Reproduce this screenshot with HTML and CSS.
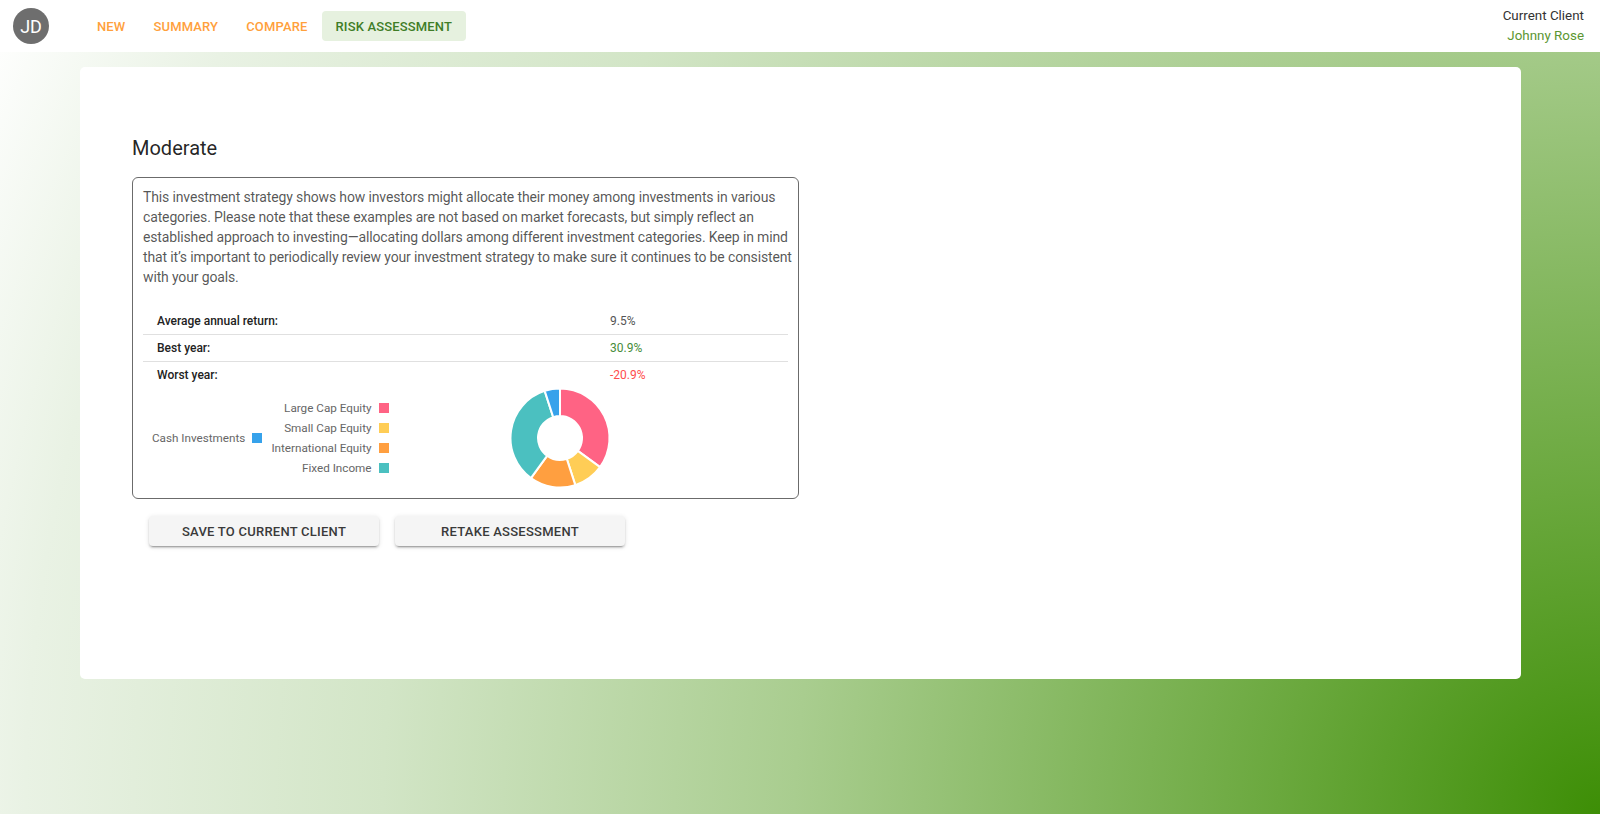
FILE: index.html
```html
<!DOCTYPE html>
<html lang="en">
<head>
<meta charset="utf-8">
<title>Risk Assessment</title>
<link rel="stylesheet" href="styles.css">
</head>
<body>
<header class="topbar">
  <div class="avatar">JD</div>
  <nav class="nav">
    <a class="nav-item">NEW</a>
    <a class="nav-item">SUMMARY</a>
    <a class="nav-item">COMPARE</a>
    <a class="nav-item active">RISK ASSESSMENT</a>
  </nav>
  <div class="client">
    <div class="client-label">Current Client</div>
    <div class="client-name">Johnny Rose</div>
  </div>
</header>
<main class="card">
  <h2 class="title">Moderate</h2>
  <section class="panel">
    <p class="desc">This investment strategy shows how investors might allocate their money among investments in various categories. Please note that these examples are not based on market forecasts, but simply reflect an established approach to investing—allocating dollars among different investment categories. Keep in mind that it’s important to periodically review your investment strategy to make sure it continues to be consistent with your goals.</p>
    <div class="stats">
      <div class="row"><span class="label">Average annual return:</span><span class="value">9.5%</span></div>
      <div class="row"><span class="label">Best year:</span><span class="value good">30.9%</span></div>
      <div class="row"><span class="label">Worst year:</span><span class="value bad">-20.9%</span></div>
    </div>
    <div class="chart">
      <div class="legend">
        <div class="legend-col">
          <div class="legend-item">Cash Investments<i class="sw sw-blue"></i></div>
        </div>
        <div class="legend-col">
          <div class="legend-item">Large Cap Equity<i class="sw sw-pink"></i></div>
          <div class="legend-item">Small Cap Equity<i class="sw sw-yellow"></i></div>
          <div class="legend-item">International Equity<i class="sw sw-orange"></i></div>
          <div class="legend-item">Fixed Income<i class="sw sw-teal"></i></div>
        </div>
      </div>
      <svg class="donut" width="100" height="100" viewBox="0 0 100 100">
        <g stroke="#fff" stroke-width="2" stroke-linejoin="round">
          <path fill="#ff6384" d="M50 0.5 A49.5 49.5 0 0 1 90.05 79.10 L67.80 62.93 A22 22 0 0 0 50 28 Z"/>
          <path fill="#ffcd56" d="M90.05 79.10 A49.5 49.5 0 0 1 65.30 97.08 L56.80 70.92 A22 22 0 0 0 67.80 62.93 Z"/>
          <path fill="#ff9f40" d="M65.30 97.08 A49.5 49.5 0 0 1 20.90 90.05 L37.07 67.80 A22 22 0 0 0 56.80 70.92 Z"/>
          <path fill="#4bc0c0" d="M20.90 90.05 A49.5 49.5 0 0 1 34.70 2.92 L43.20 29.08 A22 22 0 0 0 37.07 67.80 Z"/>
          <path fill="#36a2eb" d="M34.70 2.92 A49.5 49.5 0 0 1 50 0.5 L50 28 A22 22 0 0 0 43.20 29.08 Z"/>
        </g>
      </svg>
    </div>
  </section>
  <div class="actions">
    <button class="btn">SAVE TO CURRENT CLIENT</button>
    <button class="btn">RETAKE ASSESSMENT</button>
  </div>
</main>
</body>
</html>
```
FILE: styles.css
```css
html, body {
  margin: 0;
  padding: 0;
}
body {
  min-height: 814px;
  font-family: Roboto, "Liberation Sans", Arial, sans-serif;
  color: rgba(0, 0, 0, 0.87);
  background: radial-gradient(circle 1790px at 100% 100%, #3d8e06 0%, #6aa83d 18%, #a9cd8f 45%, #d2e5c6 68%, #e9f2e4 88%, #ffffff 100%);
  overflow: hidden;
}
.topbar {
  height: 52px;
  background: #fff;
  display: flex;
  align-items: center;
  padding: 0 16px 0 13px;
}
.avatar {
  width: 36px;
  height: 36px;
  border-radius: 50%;
  background: #6e6e6e;
  color: #fff;
  font-size: 18px;
  display: flex;
  align-items: center;
  justify-content: center;
  flex: none;
}
.nav {
  display: flex;
  align-items: center;
  margin-left: 34px;
}
.nav-item {
  height: 30px;
  padding: 0 14px;
  display: flex;
  align-items: center;
  font-size: 13px;
  font-weight: 500;
  letter-spacing: 0.15px;
  color: #ffa03c;
  border-radius: 4px;
  cursor: pointer;
}
.nav-item.active {
  background: #e6f1df;
  color: #3f7d27;
}
.client {
  margin-left: auto;
  text-align: right;
  font-size: 13.4px;
  line-height: 20px;
  align-self: flex-start;
  padding-top: 6px;
}
.client-label {
  color: #333;
}
.client-name {
  color: #5c9632;
}
.card {
  display: block;
  width: 1441px;
  height: 612px;
  box-sizing: border-box;
  margin: 15px 0 0 80px;
  background: #fff;
  border-radius: 5px;
  padding: 65px 0 0 52px;
}
.title {
  margin: 0;
  font-size: 20px;
  font-weight: 400;
  line-height: 32px;
  color: rgba(0, 0, 0, 0.87);
}
.panel {
  margin-top: 13px;
  width: 667px;
  height: 322px;
  box-sizing: border-box;
  border: 1px solid #6b6b6b;
  border-radius: 6px;
  padding: 9px 10px 10px 10px;
}
.desc {
  margin: 0 -8px 0 0;
  font-size: 14px;
  line-height: 20px;
  letter-spacing: -0.14px;
  color: rgba(0, 0, 0, 0.68);
}
.stats {
  margin-top: 21px;
}
.row {
  display: grid;
  grid-template-columns: 453px 1fr;
  height: 26px;
  align-items: center;
  padding-left: 14px;
  font-size: 12px;
}
.row + .row {
  border-top: 1px solid #e0e0e0;
}
.label {
  font-weight: 500;
  color: #222;
}
.value {
  color: #555;
}
.value.good {
  color: #468c3a;
}
.value.bad {
  color: #ff4d4d;
}
.chart {
  height: 100px;
  display: flex;
  align-items: center;
}
.legend {
  display: flex;
  align-items: center;
  gap: 9px;
  margin-left: 9px;
}
.legend-col {
  display: flex;
  flex-direction: column;
  align-items: flex-end;
}
.legend-item {
  height: 20px;
  display: flex;
  align-items: center;
  font-size: 11.7px;
  color: #666;
}
.sw {
  display: inline-block;
  width: 10px;
  height: 10px;
  margin-left: 7px;
}
.sw-blue { background: #36a2eb; }
.sw-pink { background: #ff6384; }
.sw-yellow { background: #ffcd56; }
.sw-orange { background: #ff9f40; }
.sw-teal { background: #4bc0c0; }
.donut {
  margin-left: 121px;
  overflow: visible;
}
.actions {
  display: flex;
  gap: 16px;
  margin-top: 17px;
  padding-left: 17px;
}
.btn {
  width: 230px;
  height: 30px;
  border: none;
  border-radius: 4px;
  background: #f5f5f5;
  color: #3a3a3a;
  font-family: Roboto, "Liberation Sans", Arial, sans-serif;
  font-size: 13px;
  font-weight: 500;
  letter-spacing: 0.25px;
  box-shadow: 0 3px 1px -2px rgba(0,0,0,0.2), 0 2px 2px 0 rgba(0,0,0,0.14), 0 1px 5px 0 rgba(0,0,0,0.12);
  cursor: pointer;
}
```
